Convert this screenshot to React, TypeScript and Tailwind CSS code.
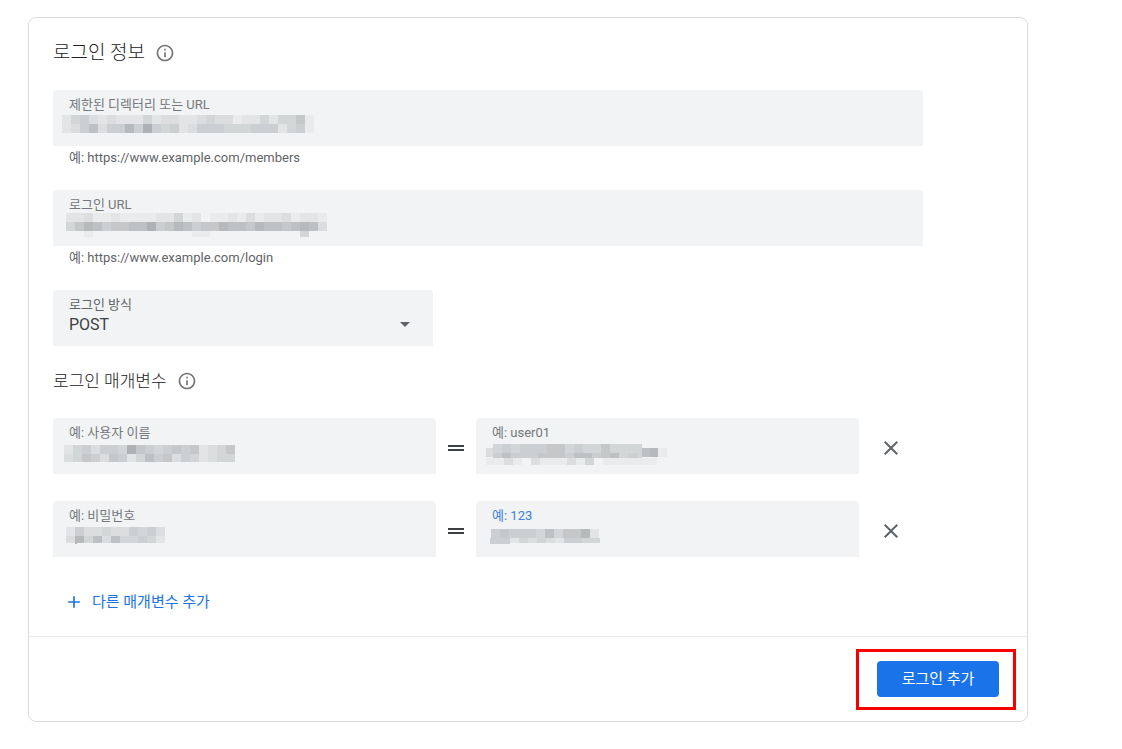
import { useId, useState } from "react";
import type { ReactNode } from "react";
import { MdAdd, MdArrowDropDown, MdClose, MdDragHandle, MdInfoOutline } from "react-icons/md";

type Strip = { x: number; y: number; h: number; cells: string; w?: number };

// Each digit is the darkness of one cell, 0 is empty
const CELL = 9;

const masks: Record<string, Strip[]> = {
  directory: [
    { x: 9, y: 25, h: 9, cells: "2453232224233223433122424461" },
    { x: 9, y: 34, h: 9, cells: "2357355859545235554445552451" },
  ],
  loginUrl: [
    { x: 13, y: 23, h: 9, cells: "22311211112241201121312231221" },
    { x: 13, y: 32, h: 9, cells: "46875667795687566877687767873" },
    { x: 13, y: 41, h: 6, cells: "00100000000000110000000000400" },
  ],
  userKey: [
    { x: 11, y: 27, h: 9, cells: "2453554965456562346" },
    { x: 11, y: 36, h: 8, cells: "3465365247563542344" },
  ],
  userValue: [
    { x: 10, y: 30, h: 9, cells: "3", w: 7 },
    { x: 17, y: 26, h: 9, cells: "4545556645446444" },
    { x: 161, y: 26, h: 14, cells: "4", w: 5 },
    { x: 17, y: 35, h: 5, cells: "5755566657756745" },
    { x: 166, y: 30, h: 9, cells: "78", w: 8 },
    { x: 182, y: 30, h: 9, cells: "1" },
    { x: 10, y: 40, h: 7, cells: "11310311131401111110" },
  ],
  passwordKey: [
    { x: 13, y: 26, h: 9, cells: "25334335453" },
    { x: 13, y: 35, h: 7, cells: "38473744542" },
    { x: 22, y: 42, h: 1, cells: "9", w: 2 },
  ],
  passwordValue: [
    { x: 15, y: 28, h: 9, cells: "565554746682" },
    { x: 14, y: 37, h: 6, cells: "5", w: 20 },
    { x: 34, y: 37, h: 5, cells: "2434325544" },
  ],
};

function Mask({ name }: { name: string }) {
  return (
    <svg
      className="pointer-events-none absolute inset-0 h-full w-full"
      shapeRendering="crispEdges"
      aria-hidden="true"
    >
      {masks[name].map((strip, i) =>
        strip.cells.split("").map((level, j) => {
          const w = strip.w ?? CELL;
          return level === "0" ? null : (
            <rect
              key={`${i}-${j}`}
              x={strip.x + j * w}
              y={strip.y}
              width={w}
              height={strip.h}
              fill="#5f6366"
              fillOpacity={Number(level) * 0.05}
            />
          );
        })
      )}
    </svg>
  );
}

type FieldProps = { label: string; mask: string; hint?: string; active?: boolean };

function Field({ label, mask, hint, active }: FieldProps) {
  const id = useId();
  return (
    <div className="min-w-0 flex-1">
      <div className="relative flex h-14 flex-col rounded-t bg-[#f1f3f4] px-4 pt-[7px]">
        <label
          htmlFor={id}
          className={
            active ? "text-[13px] leading-4 text-[#3c7fdc]" : "text-[13px] leading-4 text-[#74787c]"
          }
        >
          {label}
        </label>
        <input
          id={id}
          type="text"
          className="h-6 w-full bg-transparent text-base text-[#3c4043] outline-none"
        />
        <Mask name={mask} />
      </div>
      {hint && <p className="px-4 pt-1 text-[13px] leading-4 text-[#5f6368]">{hint}</p>}
    </div>
  );
}

function SectionTitle({ children, small }: { children: ReactNode; small?: boolean }) {
  return (
    <div className="flex items-center gap-2.5">
      <h2
        className={
          small
            ? "text-[17px] leading-6 font-light text-[#202124]"
            : "text-[19px] leading-6 font-light text-[#202124]"
        }
      >
        {children}
      </h2>
      <button type="button" aria-label="도움말" className="text-[#757575]">
        <MdInfoOutline size={20} />
      </button>
    </div>
  );
}

function ParamRow({ children }: { children: ReactNode }) {
  return (
    <div className="flex items-center">
      {children}
      <button
        type="button"
        aria-label="삭제"
        className="mt-1 ml-5 flex size-6 shrink-0 items-center justify-center text-[#5f6368]"
      >
        <MdClose size={24} />
      </button>
    </div>
  );
}

function Equals() {
  return (
    <span className="mt-1 flex w-10 shrink-0 justify-center text-[#3c4043]">
      <MdDragHandle size={24} />
    </span>
  );
}

export default function App() {
  const [method, setMethod] = useState("POST");

  return (
    <main className="min-h-screen bg-white pt-[17px] pr-8 pb-7 pl-7 font-[Roboto,'Noto_Sans_CJK_KR',sans-serif]">
      <form
        className="w-full max-w-[1000px] rounded-lg border border-[#dadce0]"
        onSubmit={(e) => e.preventDefault()}
      >
        <div className="px-6 pt-[23px] pb-[22px]">
          <SectionTitle>로그인 정보</SectionTitle>

          {/* URLs */}
          <div className="mt-[25px] flex max-w-[870px] flex-col gap-6">
            <Field
              label="제한된 디렉터리 또는 URL"
              mask="directory"
              hint="예: https://www.example.com/members"
            />
            <Field label="로그인 URL" mask="loginUrl" hint="예: https://www.example.com/login" />
          </div>

          {/* Method */}
          <div className="relative mt-6 flex h-14 max-w-[380px] flex-col rounded-t bg-[#f1f3f4] pt-[7px]">
            <label htmlFor="method" className="px-4 text-[13px] leading-4 text-[#5f6368]">
              로그인 방식
            </label>
            <select
              id="method"
              value={method}
              onChange={(e) => setMethod(e.target.value)}
              className="h-6 w-full appearance-none bg-transparent px-4 text-base text-[#3c4043] outline-none"
            >
              <option>POST</option>
              <option>GET</option>
            </select>
            <MdArrowDropDown
              size={24}
              className="pointer-events-none absolute top-[22px] right-4 text-[#5f6368]"
            />
          </div>

          {/* Parameters */}
          <div className="mt-[23px]">
            <SectionTitle small>로그인 매개변수</SectionTitle>
          </div>
          <div className="mt-[25px] flex max-w-[850px] flex-col gap-[27px]">
            <ParamRow>
              <Field label="예: 사용자 이름" mask="userKey" />
              <Equals />
              <Field label="예: user01" mask="userValue" />
            </ParamRow>
            <ParamRow>
              <Field label="예: 비밀번호" mask="passwordKey" />
              <Equals />
              <Field label="예: 123" mask="passwordValue" active />
            </ParamRow>
          </div>

          <button
            type="button"
            className="mt-[33px] ml-[11px] flex items-center gap-2 text-[15px] leading-6 text-[#1a73e8]"
          >
            <MdAdd size={20} />
            다른 매개변수 추가
          </button>
        </div>

        <div className="flex justify-end border-t border-[#e8eaed] py-6 pr-7">
          <div className="relative">
            <button
              type="submit"
              className="h-9 min-w-[122px] rounded bg-[#1a73e8] px-6 text-[15px] text-white"
            >
              로그인 추가
            </button>
            <div className="pointer-events-none absolute -top-3 -right-[17px] -bottom-[13px] -left-[21px] border-3 border-[#f60000]" />
          </div>
        </div>
      </form>
    </main>
  );
}
